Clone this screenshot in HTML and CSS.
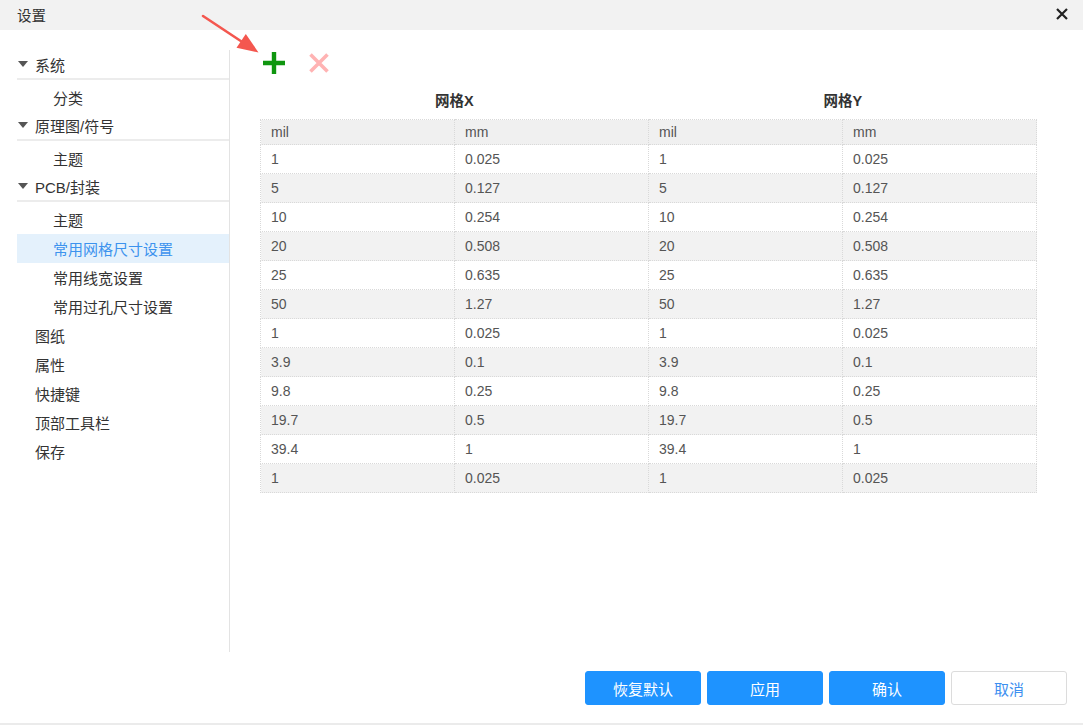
FILE: index.html
```html
<!DOCTYPE html>
<html lang="zh-CN">
<head>
<meta charset="utf-8">
<title>设置</title>
<link rel="stylesheet" href="styles.css">
</head>
<body>
<div class="dialog">
  <header class="titlebar">
    <span class="title">设置</span>
    <button class="close" aria-label="关闭">
      <svg width="12" height="12" viewBox="0 0 12 12"><path d="M1 1L11 11M11 1L1 11" stroke="#222" stroke-width="2.2" fill="none"/></svg>
    </button>
  </header>

  <div class="body">
    <nav class="sidebar">
      <div class="group">
        <div class="group-head"><span class="caret"></span>系统</div>
        <div class="item sub">分类</div>
      </div>
      <div class="group">
        <div class="group-head"><span class="caret"></span>原理图/符号</div>
        <div class="item sub">主题</div>
      </div>
      <div class="group">
        <div class="group-head"><span class="caret"></span>PCB/封装</div>
        <div class="item sub">主题</div>
        <div class="item sub active">常用网格尺寸设置</div>
        <div class="item sub">常用线宽设置</div>
        <div class="item sub">常用过孔尺寸设置</div>
      </div>
      <div class="item top">图纸</div>
      <div class="item top">属性</div>
      <div class="item top">快捷键</div>
      <div class="item top">顶部工具栏</div>
      <div class="item top">保存</div>
    </nav>

    <main class="content">
      <div class="toolbar">
        <button class="tool add" aria-label="添加">
          <svg width="24" height="24" viewBox="0 0 24 24"><path d="M12 1V23M1 12H23" stroke="#0f960f" stroke-width="4.4" fill="none"/></svg>
        </button>
        <button class="tool remove" aria-label="删除">
          <svg width="22" height="22" viewBox="0 0 22 22"><path d="M2.5 2.5L19.5 19.5M19.5 2.5L2.5 19.5" stroke="#ffb3b3" stroke-width="3.6" fill="none"/></svg>
        </button>
      </div>

      <div class="grid-heads">
        <div class="grid-head">网格X</div>
        <div class="grid-head">网格Y</div>
      </div>

      <table class="grid-table">
        <thead>
          <tr><th>mil</th><th>mm</th><th>mil</th><th>mm</th></tr>
        </thead>
        <tbody>
          <tr><td>1</td><td>0.025</td><td>1</td><td>0.025</td></tr>
          <tr><td>5</td><td>0.127</td><td>5</td><td>0.127</td></tr>
          <tr><td>10</td><td>0.254</td><td>10</td><td>0.254</td></tr>
          <tr><td>20</td><td>0.508</td><td>20</td><td>0.508</td></tr>
          <tr><td>25</td><td>0.635</td><td>25</td><td>0.635</td></tr>
          <tr><td>50</td><td>1.27</td><td>50</td><td>1.27</td></tr>
          <tr><td>1</td><td>0.025</td><td>1</td><td>0.025</td></tr>
          <tr><td>3.9</td><td>0.1</td><td>3.9</td><td>0.1</td></tr>
          <tr><td>9.8</td><td>0.25</td><td>9.8</td><td>0.25</td></tr>
          <tr><td>19.7</td><td>0.5</td><td>19.7</td><td>0.5</td></tr>
          <tr><td>39.4</td><td>1</td><td>39.4</td><td>1</td></tr>
          <tr><td>1</td><td>0.025</td><td>1</td><td>0.025</td></tr>
        </tbody>
      </table>
    </main>
  </div>

  <footer class="footer">
    <button class="btn primary">恢复默认</button>
    <button class="btn primary">应用</button>
    <button class="btn primary">确认</button>
    <button class="btn plain">取消</button>
  </footer>

  <svg class="pointer-arrow" width="70" height="55" viewBox="195 5 70 55">
    <path d="M203 16L243 42.5" stroke="#f4574f" stroke-width="2.6" stroke-linecap="round" fill="none"/>
    <path d="M258.5 52.5L236.5 47.8L245.8 34Z" fill="#f4574f"/>
  </svg>
</div>
</body>
</html>
```

FILE: styles.css
```css
* {
  box-sizing: border-box;
}

html, body {
  margin: 0;
  padding: 0;
  background: #fff;
}

body {
  font-family: "Liberation Sans", "Noto Sans CJK SC", sans-serif;
  color: #333;
}

button {
  font-family: inherit;
  cursor: pointer;
}

.dialog {
  position: relative;
  width: 1083px;
  height: 725px;
  display: flex;
  flex-direction: column;
  border-bottom: 2px solid #ebebeb;
  overflow: hidden;
}

/* Title bar */
.titlebar {
  height: 30px;
  flex: none;
  background: #f2f2f2;
  display: flex;
  align-items: center;
  justify-content: space-between;
  padding: 0 14px 2px 17px;
}

.title {
  font-size: 14.5px;
  color: #333;
}

.close {
  border: 0;
  background: transparent;
  padding: 0;
  width: 14px;
  height: 14px;
  display: flex;
  align-items: center;
  justify-content: center;
}

/* Body */
.body {
  height: 622px;
  flex: none;
  display: flex;
  padding-top: 20px;
}

.sidebar {
  width: 213px;
  margin-left: 17px;
  border-right: 1px solid #e3e3e3;
  padding-top: 1px;
  font-size: 15px;
  flex: none;
}

.group-head {
  height: 29px;
  display: flex;
  align-items: center;
  border-bottom: 2px solid #ececec;
  margin-bottom: 3px;
  padding-bottom: 1px;
  color: #333;
}

.caret {
  width: 0;
  height: 0;
  border-left: 5px solid transparent;
  border-right: 5px solid transparent;
  border-top: 6px solid #555;
  margin-left: 1px;
  margin-right: 7px;
}

.item {
  height: 29px;
  display: flex;
  align-items: center;
  color: #333;
}

.item.sub {
  padding-left: 36px;
}

.item.top {
  padding-left: 18px;
}

.item.active {
  background: #e4f1fc;
  color: #3d93ee;
}

/* Content */
.content {
  flex: 1;
  padding-left: 30px;
}

.toolbar {
  height: 26px;
  display: flex;
  align-items: center;
  gap: 22px;
  padding-left: 2px;
}

.tool {
  border: 0;
  background: transparent;
  padding: 0;
  display: flex;
  align-items: center;
  justify-content: center;
}

.grid-heads {
  width: 777px;
  margin-top: 12px;
  display: grid;
  grid-template-columns: 1fr 1fr;
}

.grid-head {
  height: 26px;
  line-height: 26px;
  text-align: center;
  font-weight: bold;
  font-size: 14.5px;
  color: #333;
}

.grid-table {
  width: 777px;
  margin-top: 5px;
  border-collapse: collapse;
  table-layout: fixed;
  font-size: 14px;
  color: #555;
}

.grid-table th,
.grid-table td {
  border: 1px dotted #d9d9d9;
  padding: 0 0 0 10px;
  text-align: left;
  font-weight: normal;
}

.grid-table th {
  height: 25px;
  background: #f0f0f0;
}

.grid-table td {
  height: 29px;
}

.grid-table tbody tr:nth-child(even) td {
  background: #f2f2f2;
}

/* Footer */
.footer {
  flex: 1;
  display: flex;
  justify-content: flex-end;
  align-items: flex-start;
  gap: 6px;
  padding: 19px 16px 0 0;
}

.btn {
  width: 116px;
  height: 34px;
  border-radius: 3px;
  font-size: 15px;
  padding: 0;
}

.btn.primary {
  background: #1e93ff;
  border: 1px solid #1e93ff;
  color: #fff;
}

.btn.plain {
  background: #fff;
  border: 1px solid #dcdcdc;
  color: #3d8ff0;
}

/* Annotation arrow overlay */
.pointer-arrow {
  position: absolute;
  left: 195px;
  top: 5px;
  pointer-events: none;
}
```
